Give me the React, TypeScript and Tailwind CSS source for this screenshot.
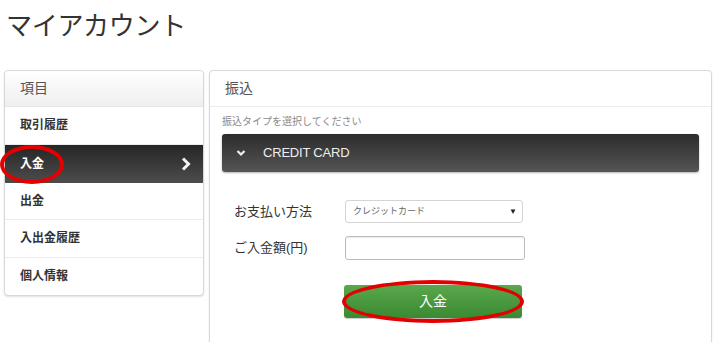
import React from "react";

const font = { fontFamily: '"Liberation Sans", "Noto Sans CJK JP", sans-serif' };

const menu = ["取引履歴", "入金", "出金", "入出金履歴", "個人情報"];

function Sidebar(): React.ReactElement {
  return (
    <div className="ml-[4px] w-[200px] self-start rounded-[4px] border border-[#d8d8d8] bg-white shadow-[0_1px_2px_rgba(0,0,0,0.12)]">
      <div className="flex h-[36px] items-center rounded-t-[4px] border-b border-[#e6e6e6] bg-gradient-to-b from-white to-[#efefef] pl-[15px] text-[14px] text-[#555]">
        項目
      </div>
      {menu.map((m, i) => {
        const active = m === "入金";
        return (
          <div
            key={m}
            className={
              active
                ? "relative flex h-[38px] items-center justify-between bg-gradient-to-b from-[#262626] to-[#4d4d4d] pl-[15px] pr-[10px] text-[12px] font-bold text-white"
                : "flex h-[37.5px] items-center pl-[15px] text-[12px] font-bold text-[#333] " +
                  (i < menu.length - 1 ? "border-b border-[#ececec]" : "")
            }
          >
            {m}
            {active ? (
              <>
                <svg width="10" height="14" viewBox="0 0 10 14" className="mr-[2px]">
                  <path d="M2 1.5 L7.5 7 L2 12.5" fill="none" stroke="#f2f2f2" strokeWidth="3" />
                </svg>
                <div className="absolute left-[-5px] top-[0px] h-[39px] w-[64px] rounded-[50%] border-[4.5px] border-[#e30000]" />
              </>
            ) : null}
          </div>
        );
      })}
    </div>
  );
}

function Transfer(): React.ReactElement {
  return (
    <div className="h-[290px] w-[503px] rounded-[4px] border border-[#d8d8d8] bg-white shadow-[0_1px_2px_rgba(0,0,0,0.1)]">
      <div className="flex h-[36px] items-center border-b border-[#ececec] pl-[15px] text-[14px] text-[#555]">振込</div>
      <div className="px-[12px]">
        <div className="mt-[8px] text-[10px] leading-[14px] text-[#8a8a8a]">振込タイプを選択してください</div>
        <div className="mt-[5px] flex h-[38px] items-center rounded-[3px] bg-gradient-to-b from-[#2c2c2c] to-[#555] pl-[14px] text-[13px] text-[#eee] shadow-[0_1px_2px_rgba(0,0,0,0.3)]">
          <svg width="10" height="8" viewBox="0 0 10 8">
            <path d="M1.5 2 L5 5.5 L8.5 2" fill="none" stroke="#f0f0f0" strokeWidth="2.2" />
          </svg>
          <span className="ml-[17px] tracking-[-0.2px]">CREDIT CARD</span>
        </div>
        <div className="mt-[28px] flex flex-col gap-[13px] pl-[12px]">
          <div className="flex items-center">
            <div className="w-[111px] text-[13px] text-[#333]">お支払い方法</div>
            <div className="flex h-[23px] w-[178px] items-center justify-between rounded-[3px] border border-[#d4d4d4] pl-[7px] pr-[5px]">
              <span className="text-[9px] text-[#666]">クレジットカード</span>
              <span className="text-[8px] text-[#222]">▼</span>
            </div>
          </div>
          <div className="flex items-center">
            <div className="w-[111px] text-[13px] text-[#333]">ご入金額(円)</div>
            <div className="h-[24px] w-[180px] rounded-[3px] border border-[#bbb] shadow-[inset_0_1px_1px_rgba(0,0,0,0.08)]" />
          </div>
        </div>
        <div className="relative ml-[122px] mt-[25px] flex h-[33px] w-[178px] items-center justify-center rounded-[3px] bg-gradient-to-b from-[#5aa84c] to-[#3a8a33] text-[14px] text-white shadow-[0_1px_1px_rgba(0,0,0,0.2)]">
          入金
          <div className="absolute left-[-2px] top-[-5px] h-[43px] w-[182px] rounded-[50%] border-[4.5px] border-[#e30000]" />
        </div>
      </div>
    </div>
  );
}

export default function App(): React.ReactElement {
  return (
    <div className="relative h-[342px] w-[716px] overflow-hidden bg-white" style={font}>
      <div className="pl-[6px] pt-[8px] text-[26px] leading-[36px] tracking-[-0.3px] text-[#333]">マイアカウント</div>
      <div className="mt-[26px] flex gap-[5px]">
        <Sidebar />
        <Transfer />
      </div>
    </div>
  );
}
